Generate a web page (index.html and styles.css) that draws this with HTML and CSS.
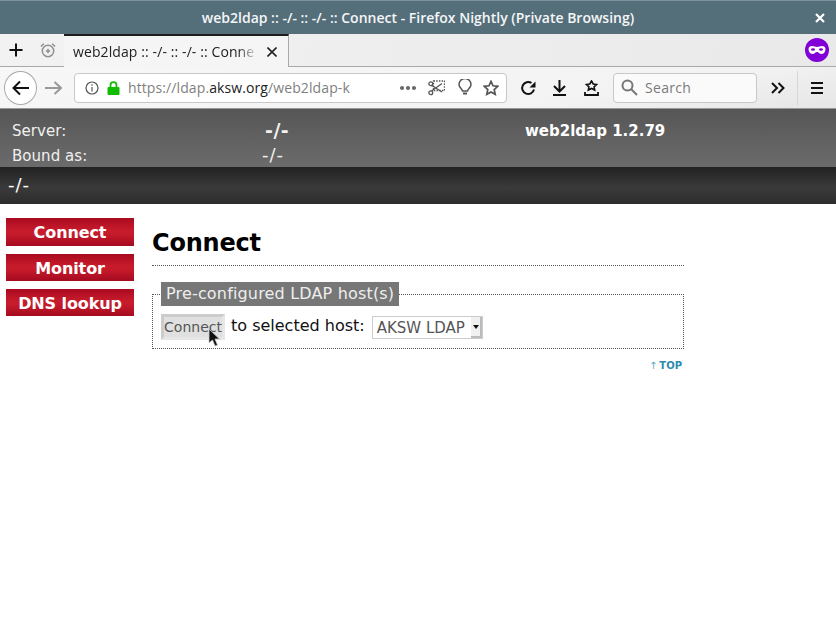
FILE: index.html
```html
<!DOCTYPE html>
<html lang="en">
<head>
    <meta charset="UTF-8">
    <title>web2ldap</title>
    <link rel="stylesheet" href="styles.css">
</head>
<body>
    <div class="titlebar">
        <div class="window-title">web2ldap :: -/- :: -/- :: Connect - Firefox Nightly (Private Browsing)</div>
        <svg class="window-close" width="10" height="10" viewBox="0 0 10 10"><path d="M1 1l8 8M9 1l-8 8" stroke="#fff" stroke-width="2.2"/></svg>
    </div>

    <div class="tabstrip">
        <svg class="strip-icon" width="16" height="16" viewBox="0 0 16 16"><path d="M8 1.500v13M1.500 8h13" stroke="#111" stroke-width="2"/></svg>
        <svg class="strip-icon alarm" width="16" height="16" viewBox="0 0 16 16" fill="none" stroke="#8f8f8f" stroke-width="1.500"><circle cx="8" cy="9" r="5.700"/><path d="M5.800 9h4.400M8 6.800v4.400M1 4.500L3.800 1.800M15 4.500L12.200 1.800"/></svg>
        <div class="tab">
            <span class="tab-label">web2ldap :: -/- :: -/- :: Conne</span>
            <svg width="10" height="10" viewBox="0 0 10 10"><path d="M.5.500l9 9M9.500.500l-9 9" stroke="#222" stroke-width="1.600"/></svg>
        </div>
        <div class="strip-fill"></div>
        <svg class="mask" width="24" height="24" viewBox="0 0 24 24"><circle cx="12" cy="12" r="12" fill="#8000d7"/><path d="M3.500 11c0-2 1.500-3 3.500-3 2 0 3.500 1 5 1s3-1 5-1c2 0 3.500 1 3.500 3 0 3-2 5-4 5-2.200 0-2.800-2-4.500-2s-2.300 2-4.500 2c-2 0-4-2-4-5z" fill="#fff"/><ellipse cx="8" cy="11.500" rx="2" ry="1.300" fill="#8000d7"/><ellipse cx="16" cy="11.500" rx="2" ry="1.300" fill="#8000d7"/></svg>
    </div>

    <div class="navbar">
        <div class="back">
            <svg width="18" height="16" viewBox="0 0 18 16" fill="none" stroke="#111" stroke-width="2"><path d="M1.500 8H17M8 1.500L1.500 8 8 14.500"/></svg>
        </div>
        <svg class="forward" width="17" height="14" viewBox="0 0 17 14" fill="none" stroke="#999" stroke-width="2"><path d="M16 7H0M9.500 1L16 7l-6.500 6"/></svg>
        <div class="urlbar">
            <svg width="14" height="14" viewBox="0 0 14 14" fill="none" stroke="#555" stroke-width="1.200"><circle cx="7" cy="7" r="6"/><path d="M7 6v4.500M7 3.200v1.600"/></svg>
            <svg class="lock" width="13" height="14" viewBox="0 0 13 14"><path d="M3.500 6V4.200a3 3 0 0 1 6 0V6" fill="none" stroke="#12bc00" stroke-width="1.800"/><rect x=".5" y="6" width="12" height="8" rx="1" fill="#12bc00"/></svg>
            <span class="url">https://ldap.<b>aksw.org</b>/web2ldap-k</span>
            <span class="dots"><i></i><i></i><i></i></span>
            <svg class="url-icon scissors" width="17" height="16" viewBox="0 0 17 16" fill="none" stroke="#555" stroke-width="1.300"><rect x="5.500" y="1" width="11" height="9.500" stroke-dasharray="1.500 1.200"/><path d="M3.500 5.200L14 12M3.500 11L14 3.500"/><circle cx="2.800" cy="3.800" r="1.900"/><circle cx="2.800" cy="12.700" r="1.900"/></svg>
            <svg class="url-icon" width="14" height="17" viewBox="0 0 14 17" fill="none" stroke="#555" stroke-width="1.500"><path d="M4.500 12C4 9.500 1 8.500 1 5.500a6 6 0 0 1 12 0c0 3-3 4-3.500 6.500z"/><path d="M5 14.500h4" stroke-width="2"/></svg>
            <svg class="url-icon" width="16" height="16" viewBox="0 0 16 16" fill="none" stroke="#555" stroke-width="1.700"><path d="M8 1.300l2 4.500 4.800.5-3.600 3.200 1 4.800L8 11.900l-4.200 2.400 1-4.800L1.200 6.300 6 5.800z"/></svg>
        </div>
        <svg class="tool reload" width="16" height="16" viewBox="0 0 16 16" fill="none" stroke="#111" stroke-width="2"><path d="M14 9.500A6 6 0 1 1 11.500 3"/><path d="M15.500 1.500V7.500H9.500z" fill="#111" stroke="none"/></svg>
        <svg class="tool download" width="15" height="16" viewBox="0 0 15 16" fill="none" stroke="#111" stroke-width="2"><path d="M7.500 0v11M2 6l5.500 5.500L13 6M1 15h13"/></svg>
        <svg class="tool library" width="15" height="16" viewBox="0 0 15 16" fill="none" stroke="#111" stroke-width="1.600"><path d="M7.500 1l1.700 3 3.300.5-2.400 2.300.6 3.200-3.200-1.500L4.300 10l.6-3.200-2.400-2.300 3.300-.5z"/><path d="M1 12v3h13v-3" stroke-width="1.800"/></svg>
        <div class="searchbar">
            <svg width="17" height="17" viewBox="0 0 17 17" fill="none" stroke="#777" stroke-width="2"><circle cx="6.500" cy="6.500" r="5"/><path d="M10 10l6 6"/></svg>
            <span>Search</span>
        </div>
        <svg class="chevrons" width="14" height="12" viewBox="0 0 14 12" fill="none" stroke="#111" stroke-width="2"><path d="M1 1l5 5-5 5M7.500 1l5 5-5 5"/></svg>
        <div class="nav-sep"></div>
        <div class="hamburger"><i></i><i></i><i></i></div>
    </div>

    <header class="page-head">
        <div class="status">
            <div class="status-row">
                <span class="status-label server">Server:</span>
                <strong class="status-value">-/-</strong>
                <strong class="version">web2ldap 1.2.79</strong>
            </div>
            <div class="status-row">
                <span class="status-label bound">Bound as:</span>
                <span class="status-value">-/-</span>
            </div>
        </div>
        <div class="crumb">-/-</div>
    </header>

    <div class="main">
        <nav class="sidebar">
            <a href="#" class="cmd">Connect</a>
            <a href="#" class="cmd">Monitor</a>
            <a href="#" class="cmd">DNS lookup</a>
        </nav>
        <div class="content">
            <h1>Connect</h1>
            <fieldset class="hosts">
                <legend>Pre-configured LDAP host(s)</legend>
                <div class="form-row">
                    <span class="btn">Connect</span>
                    <span class="form-text">to selected host:</span>
                    <span class="select">AKSW LDAP<span class="arrow"></span></span>
                </div>
                <svg class="pointer" width="14" height="20" viewBox="0 0 14 20"><path d="M1 1v14l3.500-3 2.500 6 2.500-1-2.500-6h4.500z" fill="#111" stroke="#ccc" stroke-width=".8"/></svg>
            </fieldset>
            <div class="top-link"><a href="#"><span class="up">↑</span>TOP</a></div>
        </div>
    </div>
</body>
</html>
```

FILE: styles.css
```css
* { margin: 0; padding: 0; box-sizing: border-box; }
body {
    font-family: "DejaVu Sans", sans-serif;
    background: white;
    height: 637px;
    overflow: hidden;
}

/* browser window */
.titlebar {
    height: 34px;
    background: #546e7a;
    border-top: 1px solid #7d929b;
    display: flex;
    align-items: center;
    justify-content: center;
    position: relative;
}
.window-title {
    font-family: "Open Sans", sans-serif;
    font-size: 14px;
    font-weight: 600;
    color: #f4f6f7;
}
.window-close {
    position: absolute;
    right: 11px;
    top: 12px;
}
.tabstrip {
    height: 33px;
    background: linear-gradient(100deg, #f2f2f2, #e9e9e9);
    border-bottom: 1px solid #a9a9a9;
    display: flex;
    align-items: center;
    padding-left: 8px;
}
.strip-icon { flex: none; margin-right: 16px; }
.alarm { margin-right: 8px; }
.tab {
    width: 225px;
    height: 33px;
    background: #f5f5f5;
    border-top: 2px solid #1c1c1c;
    border-right: 1px solid #a9a9a9;
    display: flex;
    align-items: center;
    padding-left: 9px;
    margin-bottom: -1px;
    font-family: "Open Sans", sans-serif;
    font-size: 14px;
    letter-spacing: .1px;
    color: #222;
}
.tab-label {
    width: 185px;
    white-space: nowrap;
    -webkit-mask-image: linear-gradient(90deg, #000 165px, transparent 185px);
    mask-image: linear-gradient(90deg, #000 165px, transparent 185px);
    margin-right: 9px;
}
.strip-fill { flex: 1; }
.mask { margin-right: 7px; }
.navbar {
    height: 41px;
    background: linear-gradient(170deg, #f7f7f7, #f3f3f3 70%, #e6e6e6);
    display: flex;
    align-items: center;
    padding-left: 4px;
}
.back {
    width: 33px;
    height: 34px;
    border-radius: 50%;
    background: white;
    border: 1px solid #a8a8a8;
    display: flex;
    align-items: center;
    justify-content: center;
}
.forward { margin-left: 8px; }
.urlbar {
    width: 433px;
    height: 30px;
    margin-left: 12px;
    background: white;
    border: 1px solid #c8c8c8;
    border-radius: 4px;
    display: flex;
    align-items: center;
    padding-left: 10px;
}
.lock { margin-left: 8px; }
.url {
    width: 272px;
    margin-left: 8px;
    font-family: "Open Sans", sans-serif;
    font-size: 14px;
    letter-spacing: .1px;
    color: #7f7f7f;
    white-space: nowrap;
}
.url b { font-weight: 400; color: #222; }
.dots { display: flex; gap: 2px; width: 22px; }
.dots i {
    width: 4px;
    height: 4px;
    border-radius: 50%;
    background: #666;
}
.url-icon { margin-left: 11px; }
.scissors { margin-left: 6px; margin-right: 2px; }
.tool { margin-left: 14px; flex: none; }
.reload { margin-left: 13px; }
.download { margin-left: 16px; }
.library { margin-left: 17px; }
.searchbar {
    width: 144px;
    height: 30px;
    margin-left: 14px;
    background: #fafafa;
    border: 1px solid #c8c8c8;
    border-radius: 4px;
    display: flex;
    align-items: center;
    gap: 7px;
    padding-left: 7px;
    font-family: "Open Sans", sans-serif;
    font-size: 14px;
    letter-spacing: .3px;
    color: #7a7a7a;
}
.chevrons { margin-left: 14px; }
.nav-sep {
    width: 1px;
    height: 34px;
    background: #d6d6d6;
    margin-left: 12px;
}
.hamburger {
    margin-left: 13px;
    width: 12px;
    display: flex;
    flex-direction: column;
    gap: 3px;
}
.hamburger i { height: 2px; background: #111; }

/* page header */
.page-head { color: white; border-top: 1px solid #999; }
.status {
    height: 58px;
    background: linear-gradient(#565656, #6b6b6b);
    padding: 10px 0 0 12px;
    font-size: 15px;
    letter-spacing: .05px;
    line-height: 25px;
    color: #f0f0f0;
}
.status-row { display: flex; }
.status-label { flex: none; }
.server { width: 253px; }
.bound { width: 250px; }
.status-value { width: 260px; font-size: 18px; letter-spacing: 1px; font-weight: 400; line-height: 21px; }
strong.status-value { font-weight: bold; font-size: 19px; letter-spacing: .5px; line-height: 23px; }
.version { color: white; letter-spacing: 0; }
.crumb {
    height: 37px;
    background: linear-gradient(#222, #3a3a3a 55%, #2c2c2c);
    padding: 0 0 0 8px;
    font-size: 18px;
    letter-spacing: 1px;
    line-height: 35px;
}

/* page body */
.main { display: flex; padding: 14px 0 0 6px; }
.sidebar {
    width: 128px;
    display: flex;
    flex-direction: column;
    gap: 8px;
    flex: none;
}
.cmd {
    display: block;
    height: 27px;
    background: linear-gradient(#a90a20, #c81c2c 45%, #c41a2a 60%, #a50a20);
    color: white;
    font-weight: bold;
    font-size: 16px;
    letter-spacing: -.1px;
    line-height: 29px;
    text-align: center;
    text-decoration: none;
}
.cmd:first-child { height: 28px; }
.content { width: 532px; margin-left: 18px; }
h1 {
    font-size: 24px;
    letter-spacing: -.2px;
    line-height: 29px;
    padding-bottom: 7px;
    margin-top: 11px;
    border-bottom: 1px dotted #555;
    color: black;
}
.hosts {
    position: relative;
    margin-top: 16px;
    height: 67px;
    border: 1px dotted #555;
    padding: 0 8px;
}
legend {
    background: #777;
    color: #eee;
    font-size: 16px;
    letter-spacing: .17px;
    line-height: 24px;
    padding: 0 5px;
}
.form-row { display: flex; align-items: center; margin-top: 8px; }
.btn {
    width: 64px;
    height: 26px;
    background: #e0e0e0;
    border: 3px solid;
    border-color: #ccc #e6e6e6 #e6e6e6 #ccc;
    color: #555;
    font-size: 14px;
    line-height: 21px;
    text-align: center;
    white-space: nowrap;
}
.form-text { margin-left: 6px; font-size: 16px; color: #111; line-height: 22px; margin-bottom: 2px; }
.select {
    position: relative;
    width: 111px;
    height: 23px;
    margin-left: 7px;
    border: 1px solid #ccc;
    background: white;
    padding-left: 4px;
    color: #555;
    font-size: 15px;
    line-height: 22px;
}
.arrow {
    position: absolute;
    right: 0;
    top: 0;
    width: 11px;
    height: 21px;
    background: #f0f0f0;
    border-right: 2px solid #bbb;
    border-bottom: 2px solid #bbb;
}
.arrow::after {
    content: "";
    position: absolute;
    left: 2px;
    top: 8px;
    border: 3px solid transparent;
    border-top: 4px solid #111;
}
.pointer {
    position: absolute;
    left: 55px;
    top: 22px;
}
.top-link { text-align: right; margin-top: 10px; padding-right: 2px; font-size: 10px; line-height: 14px; }
.top-link a { color: #2e8bae; font-weight: bold; text-decoration: none; }
.up { font-weight: normal; color: #5fa8c4; margin-right: 2px; }
```
